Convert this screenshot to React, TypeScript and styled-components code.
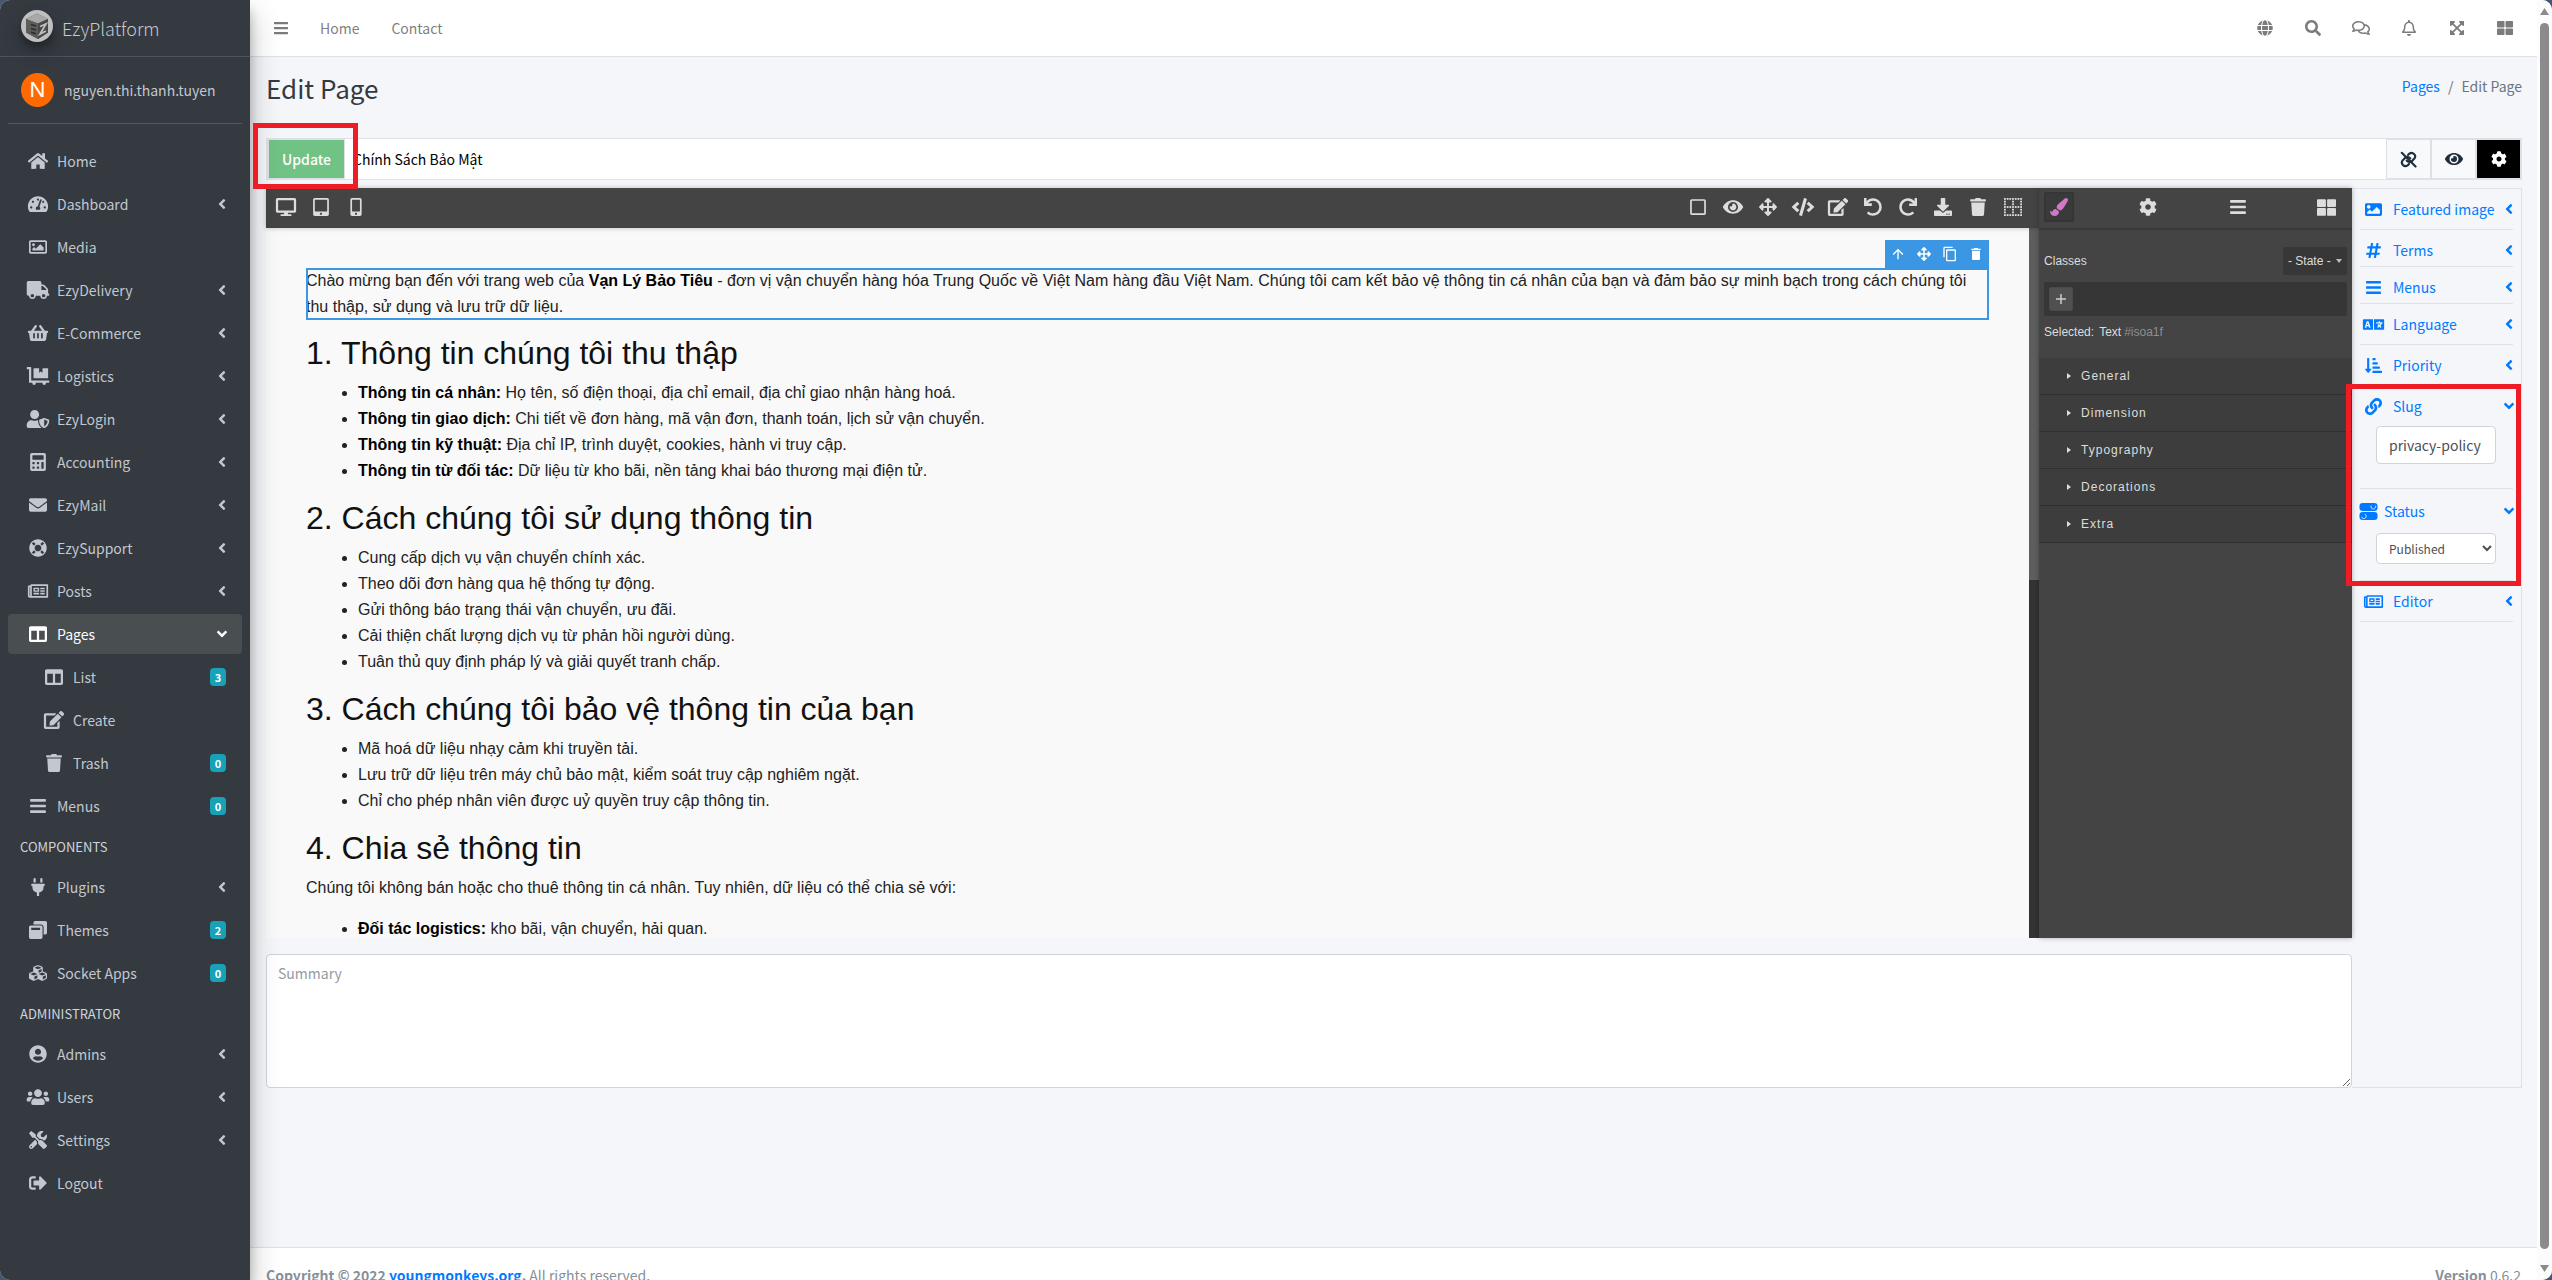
import React from "react";
import styled, { createGlobalStyle, css } from "styled-components";
import {
  FaArrowsAlt, FaBars, FaCalculator, FaAngleLeft, FaAngleDown,
  FaCode, FaCog, FaColumns, FaCubes, FaDesktop, FaDollyFlatbed, FaDownload, FaEdit, FaEnvelope, FaExpandArrowsAlt,
  FaEye, FaGlobe, FaHashtag, FaHome, FaImage, FaLanguage, FaLifeRing, FaLink, FaMobileAlt, FaPaintBrush, FaPlug,
  FaRedo, FaRegBell, FaRegComments, FaRegImage, FaRegNewspaper, FaRegSquare, FaSearch, FaShoppingBasket,
  FaSignOutAlt, FaSortAmountDownAlt, FaTabletAlt, FaTachometerAlt, FaThLarge, FaTools, FaTrash, FaTruck, FaUndo,
  FaUserCircle, FaUserShield, FaUsers, FaWindowRestore,
} from "react-icons/fa";
import { MdArrowUpward, MdContentCopy, MdDelete } from "react-icons/md";

const uiFont = '"Source Sans Pro", "Noto Sans CJK SC", "Noto Sans", sans-serif';
const docFont = '"Liberation Sans", Arial, Helvetica, sans-serif';

const GlobalStyle = createGlobalStyle`
  *, *::before, *::after { box-sizing: border-box; }
  body {
    margin: 0;
    background: #46586f;
    color: #212529;
    font-family: ${uiFont};
    font-size: 14px;
    line-height: 24px;
  }
  button, input, select, textarea { font: inherit; }
  a { color: #007bff; text-decoration: none; }
  h1, h2, p, ul { margin: 0; padding: 0; }
`;

/* The drawing is wider than tall so that wide icons keep their full height. */
const Glyph = styled.span<{ $size: number; $box?: number }>`
  display: inline-flex;
  flex: none;
  align-items: center;
  justify-content: center;
  width: ${(p) => (p.$box ? `${p.$box}px` : "auto")};
  svg {
    display: block;
    flex: none;
    width: ${(p) => p.$size + 6}px;
    height: ${(p) => p.$size}px;
  }
`;

const Window = styled.div`
  display: flex;
  height: 100vh;
  overflow: hidden;
  border-radius: 10px;
  background: #f4f6f9;
`;

/* ---------- Sidebar ---------- */

const Sidebar = styled.aside`
  position: relative;
  z-index: 5;
  flex: none;
  width: 250px;
  background: #343a40;
  color: #c2c7d0;
  box-shadow: 0 14px 28px rgba(0, 0, 0, 0.25), 0 10px 10px rgba(0, 0, 0, 0.22);
`;

const Brand = styled.a`
  display: flex;
  align-items: center;
  gap: 9px;
  height: 57px;
  padding-left: 21px;
  border-bottom: 1px solid #4b545c;
  color: #c6c8ca;
  font-size: 18px;
  font-weight: 300;
`;

const BrandMark = styled.span`
  width: 32px;
  height: 32px;
  margin-bottom: 4px;
  border-radius: 50%;
  box-shadow: 0 10px 20px rgba(0, 0, 0, 0.19), 0 6px 6px rgba(0, 0, 0, 0.23);
  svg { display: block; }
`;

const UserPanel = styled.a`
  display: flex;
  align-items: center;
  gap: 10px;
  height: 67px;
  margin: 0 8px;
  padding-left: 13px;
  border-bottom: 1px solid #4f5962;
  color: #c2c7d0;
`;

const Avatar = styled.span`
  width: 33px;
  height: 34px;
  border-radius: 50%;
  background: #ff6a00;
  color: #fff;
  font: 22px/34px ${docFont};
  text-align: center;
`;

const Nav = styled.nav`
  display: flex;
  flex-direction: column;
  gap: 3px;
  padding: 17px 8px 0;
`;

const NavLink = styled.a<{ $active?: boolean; $nested?: boolean }>`
  display: flex;
  align-items: center;
  gap: 6px;
  height: 40px;
  padding: 0 16px 0 ${(p) => (p.$nested ? 32 : 16)}px;
  border-radius: 4px;
  color: #c2c7d0;
  ${(p) => p.$active && css`
    background: #494e51;
    color: #fff;
  `}
`;

const NavText = styled.span`
  flex: 1;
`;

const NavHeader = styled.div`
  height: 35px;
  padding-left: 12px;
  color: #d0d4db;
  font-size: 13px;
  line-height: 35px;
`;

const Badge = styled.span`
  min-width: 16px;
  height: 18px;
  border-radius: 4px;
  background: #17a2b8;
  color: #fff;
  font-size: 11px;
  font-weight: 700;
  line-height: 18px;
  text-align: center;
`;

/* ---------- Page chrome ---------- */

const Page = styled.div`
  display: flex;
  flex: 1;
  flex-direction: column;
  min-width: 0;
`;

const Navbar = styled.header`
  display: flex;
  flex: none;
  align-items: center;
  justify-content: space-between;
  height: 57px;
  padding: 0 24px;
  border-bottom: 1px solid #dee2e6;
  background: #fff;
`;

const NavGroup = styled.div`
  display: flex;
  align-items: center;
  gap: 32px;
  color: #7b7b7b;
`;

const TopLink = styled.a`
  color: #7f7f7f;
`;

const IconButton = styled.button`
  display: flex;
  align-items: center;
  justify-content: center;
  padding: 0;
  border: 0;
  background: none;
  color: inherit;
  cursor: pointer;
`;

const Content = styled.main`
  flex: none;
  min-height: calc(100vh - 90px);
  padding: 0 15px 0 16px;
`;

const ContentHeader = styled.div`
  display: flex;
  justify-content: space-between;
  height: 81px;
  h1 {
    color: #343a40;
    font-size: 26px;
    font-weight: 400;
    line-height: 62px;
  }
`;

const Breadcrumb = styled.nav`
  display: flex;
  gap: 8px;
  color: #6c757d;
  line-height: 58px;
`;

const TitleBar = styled.div`
  display: flex;
  height: 42px;
  margin-bottom: 8px;
  border: 1px solid #dee2e6;
  background: #fff;
`;

const UpdateCell = styled.div`
  position: relative;
  display: flex;
  width: 78px;
  padding: 1px 1px 1px 2px;
  background: #dee0e6;
`;

const UpdateButton = styled.button`
  flex: 1;
  padding: 0;
  border: 0;
  background: #71c285;
  color: #fff;
  font-weight: 500;
`;

const Callout = styled.div<{ $inset: string }>`
  position: absolute;
  inset: ${(p) => p.$inset};
  z-index: 10;
  border: 5px solid #ee1c25;
  pointer-events: none;
`;

const TitleInput = styled.input`
  flex: 1;
  min-width: 0;
  padding: 0 8px;
  border: 0;
  outline: 0;
  background: #fff;
  color: #000;
`;

const TitleAction = styled.button<{ $dark?: boolean }>`
  display: flex;
  align-items: center;
  justify-content: center;
  width: 45px;
  padding: 0;
  border: 1px solid #dddfe6;
  background: ${(p) => (p.$dark ? "#000" : "#f8f9fb")};
  color: ${(p) => (p.$dark ? "#fff" : "#1f2d3d")};
`;

const Workspace = styled.div`
  display: grid;
  grid-template-columns: minmax(0, 1fr) 170px;
`;

const MainColumn = styled.div`
  display: flex;
  flex-direction: column;
  gap: 16px;
`;

/* ---------- Visual editor ---------- */

const Editor = styled.div`
  display: flex;
  height: 750px;
  background: #444;
  color: #ddd;
  font-family: ${docFont};
  font-size: 12px;
`;

const CanvasColumn = styled.div`
  display: flex;
  flex: 85;
  flex-direction: column;
  min-width: 0;
`;

const EditorToolbar = styled.div`
  z-index: 1;
  display: flex;
  flex: none;
  align-items: center;
  justify-content: space-between;
  height: 40px;
  padding: 0 9px 2px 2px;
  background: #444;
  box-shadow: 0 0 5px rgba(0, 0, 0, 0.25);
`;

const ToolRow = styled.div`
  display: flex;
`;

const Tool = styled(IconButton)`
  width: 35px;
  height: 36px;
  color: #ddd;
`;

const CanvasFrame = styled.div`
  display: flex;
  flex: 1;
  min-height: 0;
`;

const Document = styled.article`
  flex: 1;
  min-width: 0;
  padding: 40px;
  overflow: hidden;
  background: #f9f9f9;
  color: #222;
  font-size: 16px;
  line-height: 26px;
  h2 {
    margin-bottom: 8px;
    color: #111;
    font-size: 32px;
    font-weight: 400;
    line-height: 38px;
  }
  p { margin-bottom: 15px; }
  ul { margin-bottom: 15px; padding-left: 52px; }
  strong { color: #000; }
`;

const SelectedBlock = styled.div`
  position: relative;
  margin-bottom: 14px;
  outline: 2px solid #3b97e3;
  outline-offset: -2px;
  p { margin: 0; }
`;

const BlockActions = styled.div`
  position: absolute;
  right: 0;
  bottom: 100%;
  display: flex;
  height: 28px;
  background: #3b97e3;
  color: #fff;
`;

const BlockAction = styled(IconButton)`
  width: 26px;
`;

const CanvasScroll = styled.div`
  width: 10px;
  background: #333;
  &::before {
    display: block;
    height: 352px;
    background: #5e5e5e;
    content: "";
  }
`;

const StylePanel = styled.section`
  z-index: 2;
  flex: 15;
  min-width: 0;
  background: #444;
  box-shadow: 0 0 5px rgba(0, 0, 0, 0.3);
`;

const PanelTabs = styled.div`
  display: flex;
  align-items: center;
  justify-content: space-between;
  height: 42px;
  padding: 0 10px 2px 5px;
  border-bottom: 2px solid #393939;
`;

const PanelTab = styled(IconButton)<{ $active?: boolean }>`
  width: 30px;
  height: 30px;
  border-radius: 2px;
  color: ${(p) => (p.$active ? "#d278c9" : "#ddd")};
  ${(p) => p.$active && css`
    background: #3a3a3a;
    box-shadow: inset 0 0 3px rgba(0, 0, 0, 0.25);
  `}
`;

const ClassManager = styled.div`
  height: 128px;
  padding: 17px 5px 0;
`;

const Row = styled.div`
  display: flex;
  align-items: center;
  justify-content: space-between;
  margin-bottom: 7px;
`;

const StateField = styled.div`
  position: relative;
  display: flex;
  align-items: center;
  width: 64px;
  height: 28px;
  border-radius: 2px;
  background: #373737;
  &::after {
    position: absolute;
    right: 5px;
    border: 3px solid transparent;
    border-top: 4px solid #bbb;
    border-bottom: 0;
    content: "";
    pointer-events: none;
  }
  select {
    width: 100%;
    padding: 0 0 0 5px;
    border: 0;
    appearance: none;
    background: none;
    color: #ddd;
  }
`;

const TagBox = styled.div`
  height: 34px;
  margin-bottom: 4px;
  padding: 5px;
  border-radius: 2px;
  background: #363636;
`;

const AddTag = styled(IconButton)`
  width: 24px;
  height: 24px;
  border: 1px solid #4a4a4a;
  border-radius: 2px;
  background: #505050;
  color: #ccc;
`;

const SelectedLine = styled.div`
  display: flex;
  gap: 5px;
  b { margin-left: -2px; color: #8f8f8f; font-weight: 400; }
`;

const Sector = styled.button`
  display: flex;
  align-items: center;
  gap: 10px;
  width: 100%;
  height: 37px;
  padding: 0 0 0 28px;
  border: 0;
  border-bottom: 1px solid #303030;
  background: #3d3d3d;
  color: #ddd;
  letter-spacing: 1px;
  text-align: left;
  &::before {
    border: 3px solid transparent;
    border-left: 4px solid #ddd;
    border-right: 0;
    content: "";
  }
`;

const Summary = styled.textarea`
  display: block;
  width: 100%;
  height: 134px;
  padding: 6px 11px;
  border: 1px solid #ced4da;
  border-radius: 4px;
  background: #fff;
  resize: vertical;
  &::placeholder { color: #939ba2; }
`;

/* ---------- Page settings ---------- */

const Settings = styled.aside`
  padding: 0 8px;
  border: 1px solid #dee2e6;
  border-left: 0;
`;

const Setting = styled.section<{ $start: number; $end: number }>`
  padding: ${(p) => p.$start}px 0 ${(p) => p.$end}px;
  border-bottom: 1px solid #dee2e6;
`;

const SettingToggle = styled.button`
  display: flex;
  align-items: center;
  width: 100%;
  height: 24px;
  padding: 0;
  border: 0;
  background: none;
  color: #007bff;
  white-space: nowrap;
`;

const SettingName = styled.span`
  flex: 1;
  padding-left: 7px;
  text-align: left;
`;

const fieldStyle = css`
  display: block;
  width: 120px;
  margin: 8px 0 0 16px;
  border: 1px solid #ced4da;
  border-radius: 4px;
  background: #fff;
  color: #495057;
`;

const SlugInput = styled.input`
  ${fieldStyle}
  height: 38px;
  padding: 0 12px;
`;

const StatusSelect = styled.select`
  ${fieldStyle}
  height: 31px;
  margin-top: 10px;
  padding: 0 0 0 8px;
  font-size: 12px;
`;

const Highlighted = styled.div`
  position: relative;
`;

const Footer = styled.footer`
  display: flex;
  flex: none;
  justify-content: space-between;
  padding: 15px 16px;
  border-top: 1px solid #dee2e6;
  background: #fff;
  color: #869099;
`;

const WindowScroll = styled.div`
  display: flex;
  flex: none;
  flex-direction: column;
  align-items: center;
  justify-content: space-between;
  width: 15px;
  padding: 8px 0;
  background: #fcfcfc;
  color: #8b8b8b;
  svg { display: block; }
`;

const ScrollThumb = styled.div`
  flex: 1;
  width: 9px;
  margin: 8px 0 16px;
  border-radius: 5px;
  background: #8b8b8b;
`;

/* ---------- Drawings ---------- */

const LogoMark = () => (
  <svg width="32" height="32" viewBox="0 0 32 32" aria-hidden="true">
    <circle cx="16" cy="16" r="16" fill="#bfbfbf" />
    <path d="M16 3.500 27 9v13.500L17 29 5 22.500V9z" fill="#555" />
    <path d="M16 3.500 27 9l-10 4.500L5 9z" fill="#a8a8a8" />
    <path d="M5 9l12 4.500V29L5 22.500z" fill="#5c5c5c" />
    <path d="M17 13.500 27 9v13.500L17 29z" fill="#484848" />
    <path d="M10 14.500l5 1.500M10 18.500l5 1.500M10 22l5 2" stroke="#2c2c2c" strokeWidth="1.800" />
    <path d="M19 16.500l6-2.500-6 10 6-3" fill="none" stroke="#bdbdbd" strokeWidth="1.800" />
  </svg>
);

const LinkSlash = () => (
  <svg viewBox="0 0 24 24" fill="none" stroke="currentColor" strokeWidth="3" strokeLinecap="round" strokeLinejoin="round">
    <path d="M9.500 13.500a5 5 0 0 0 7.500.5l3.300-3.300a5 5 0 0 0-7-7l-2 2" />
    <path d="M14.500 10.500a5 5 0 0 0-7.500-.5l-3.300 3.300a5 5 0 0 0 7 7l2-2" />
    <path d="M2.500 2.500 22 22" />
  </svg>
);

const StatusIcon = () => (
  <svg viewBox="0 0 17 16" fill="currentColor">
    <rect width="17" height="7.500" rx="3" />
    <rect y="8.500" width="17" height="7.500" rx="3" />
    <path d="M11 2.500a2.200 2.200 0 1 0 4 0" fill="none" stroke="#f4f6f9" strokeWidth=".8" />
    <path d="M2 13a2.200 2.200 0 1 0 3-2.500" fill="none" stroke="#f4f6f9" strokeWidth=".8" />
  </svg>
);

const PlusIcon = () => (
  <svg viewBox="0 0 10 10" stroke="currentColor" strokeWidth="1.500"><path d="M5 0v10M0 5h10" /></svg>
);

const gridSteps = [0, 1, 2, 3, 4, 5, 6];

const DottedGrid = () => (
  <svg viewBox="0 0 20 20" fill="currentColor">
    {gridSteps.flatMap((row) =>
      gridSteps
        .filter((col) => row % 3 === 0 || col % 3 === 0)
        .map((col) => <rect key={`${row}-${col}`} x={col * 3} y={row * 3} width="2" height="2" />)
    )}
  </svg>
);

/* ---------- Data ---------- */

type Item = { icon: React.ReactNode; label: string; arrow?: boolean; badge?: number; active?: boolean; nested?: boolean };

const mainItems: Item[] = [
  { icon: <FaHome />, label: "Home" },
  { icon: <FaTachometerAlt />, label: "Dashboard", arrow: true },
  { icon: <FaRegImage />, label: "Media" },
  { icon: <FaTruck />, label: "EzyDelivery", arrow: true },
  { icon: <FaShoppingBasket />, label: "E-Commerce", arrow: true },
  { icon: <FaDollyFlatbed />, label: "Logistics", arrow: true },
  { icon: <FaUserShield />, label: "EzyLogin", arrow: true },
  { icon: <FaCalculator />, label: "Accounting", arrow: true },
  { icon: <FaEnvelope />, label: "EzyMail", arrow: true },
  { icon: <FaLifeRing />, label: "EzySupport", arrow: true },
  { icon: <FaRegNewspaper />, label: "Posts", arrow: true },
  { icon: <FaColumns />, label: "Pages", arrow: true, active: true },
  { icon: <FaColumns />, label: "List", badge: 3, nested: true },
  { icon: <FaEdit />, label: "Create", nested: true },
  { icon: <FaTrash />, label: "Trash", badge: 0, nested: true },
  { icon: <FaBars />, label: "Menus", badge: 0 },
];

const componentItems: Item[] = [
  { icon: <FaPlug />, label: "Plugins", arrow: true },
  { icon: <FaWindowRestore />, label: "Themes", badge: 2 },
  { icon: <FaCubes />, label: "Socket Apps", badge: 0 },
];

const adminItems: Item[] = [
  { icon: <FaUserCircle />, label: "Admins", arrow: true },
  { icon: <FaUsers />, label: "Users", arrow: true },
  { icon: <FaTools />, label: "Settings", arrow: true },
  { icon: <FaSignOutAlt />, label: "Logout" },
];

const topActions: [string, React.ReactNode][] = [
  ["Language", <FaGlobe />], ["Search", <FaSearch />], ["Messages", <FaRegComments />],
  ["Notifications", <FaRegBell />], ["Fullscreen", <FaExpandArrowsAlt />], ["Apps", <FaThLarge />],
];

const deviceTools: [string, React.ReactNode][] = [
  ["Desktop", <FaDesktop />], ["Tablet", <FaTabletAlt />], ["Mobile", <FaMobileAlt />],
];

const editorTools: [string, React.ReactNode][] = [
  ["Borders", <FaRegSquare />], ["Preview", <FaEye />], ["Fullscreen", <FaArrowsAlt />], ["View code", <FaCode />],
  ["Edit code", <FaEdit />], ["Undo", <FaUndo />], ["Redo", <FaRedo />], ["Import", <FaDownload />],
  ["Clear", <FaTrash />], ["Grid", <DottedGrid />],
];

/* ---------- Parts ---------- */

const MenuItems = ({ items }: { items: Item[] }) => (
  <>
    {items.map((item) => (
      <NavLink key={item.label} href="#" $active={item.active} $nested={item.nested}>
        <Glyph $size={18} $box={27}>{item.icon}</Glyph>
        <NavText>{item.label}</NavText>
        {item.arrow && <Glyph $size={16} $box={8}>{item.active ? <FaAngleDown /> : <FaAngleLeft />}</Glyph>}
        {item.badge !== undefined && <Badge>{item.badge}</Badge>}
      </NavLink>
    ))}
  </>
);

const Tools = ({ tools }: { tools: [string, React.ReactNode][] }) => (
  <ToolRow>
    {tools.map(([name, icon]) => (
      <Tool key={name} type="button" aria-label={name}><Glyph $size={18}>{icon}</Glyph></Tool>
    ))}
  </ToolRow>
);

type SettingProps = { icon: React.ReactNode; name: string; start?: number; end?: number; iconBox?: number; open?: boolean; children?: React.ReactNode };

const SettingItem = ({ icon, name, start = 8, end = 8, iconBox = 26, open, children }: SettingProps) => (
  <Setting $start={start} $end={end}>
    <SettingToggle type="button" aria-expanded={!!open}>
      <Glyph $size={17} $box={iconBox}>{icon}</Glyph>
      <SettingName>{name}</SettingName>
      <Glyph $size={16} $box={8}>{open ? <FaAngleDown /> : <FaAngleLeft />}</Glyph>
    </SettingToggle>
    {children}
  </Setting>
);

export default function App() {
  return (
    <>
      <GlobalStyle />
      <Window>
        <Sidebar>
          <Brand href="#"><BrandMark><LogoMark /></BrandMark>EzyPlatform</Brand>
          <UserPanel href="#"><Avatar>N</Avatar>nguyen.thi.thanh.tuyen</UserPanel>
          <Nav aria-label="Main">
            <MenuItems items={mainItems} />
            <NavHeader>COMPONENTS</NavHeader>
            <MenuItems items={componentItems} />
            <NavHeader>ADMINISTRATOR</NavHeader>
            <MenuItems items={adminItems} />
          </Nav>
        </Sidebar>

        <Page>
          <Navbar>
            <NavGroup>
              <IconButton type="button" aria-label="Toggle menu"><Glyph $size={16} $box={14}><FaBars /></Glyph></IconButton>
              <TopLink href="#">Home</TopLink>
              <TopLink href="#">Contact</TopLink>
            </NavGroup>
            <NavGroup>
              {topActions.map(([name, icon]) => (
                <IconButton key={name} type="button" aria-label={name}><Glyph $size={16} $box={16}>{icon}</Glyph></IconButton>
              ))}
            </NavGroup>
          </Navbar>

          <Content>
            <ContentHeader>
              <h1>Edit Page</h1>
              <Breadcrumb aria-label="Breadcrumb"><a href="#">Pages</a><span>/</span><span>Edit Page</span></Breadcrumb>
            </ContentHeader>

            <TitleBar>
              <UpdateCell>
                <UpdateButton type="button">Update</UpdateButton>
                <Callout $inset="-16px -13px -10px -14px" />
              </UpdateCell>
              <TitleInput aria-label="Title" defaultValue="Chính Sách Bảo Mật" />
              <TitleAction type="button" aria-label="Copy link"><Glyph $size={17}><LinkSlash /></Glyph></TitleAction>
              <TitleAction type="button" aria-label="Preview"><Glyph $size={16}><FaEye /></Glyph></TitleAction>
              <TitleAction type="button" aria-label="Settings" $dark><Glyph $size={16}><FaCog /></Glyph></TitleAction>
            </TitleBar>

            <Workspace>
              <MainColumn>
                <Editor>
                  <CanvasColumn>
                    <EditorToolbar>
                      <Tools tools={deviceTools} />
                      <Tools tools={editorTools} />
                    </EditorToolbar>
                    <CanvasFrame>
                      <Document>
                        <SelectedBlock>
                          <p>Chào mừng bạn đến với trang web của <strong>Vạn Lý Bảo Tiêu</strong> - đơn vị vận chuyển hàng hóa Trung Quốc về Việt Nam hàng đầu Việt Nam. Chúng tôi cam kết bảo vệ thông tin cá nhân của bạn và đảm bảo sự minh bạch trong cách chúng tôi thu thập, sử dụng và lưu trữ dữ liệu.</p>
                          <BlockActions>
                            <BlockAction type="button" aria-label="Select parent"><Glyph $size={16}><MdArrowUpward /></Glyph></BlockAction>
                            <BlockAction type="button" aria-label="Move"><Glyph $size={14}><FaArrowsAlt /></Glyph></BlockAction>
                            <BlockAction type="button" aria-label="Copy"><Glyph $size={16}><MdContentCopy /></Glyph></BlockAction>
                            <BlockAction type="button" aria-label="Delete"><Glyph $size={16}><MdDelete /></Glyph></BlockAction>
                          </BlockActions>
                        </SelectedBlock>
                        <h2>1. Thông tin chúng tôi thu thập</h2>
                        <ul>
                          <li><strong>Thông tin cá nhân:</strong> Họ tên, số điện thoại, địa chỉ email, địa chỉ giao nhận hàng hoá.</li>
                          <li><strong>Thông tin giao dịch:</strong> Chi tiết về đơn hàng, mã vận đơn, thanh toán, lịch sử vận chuyển.</li>
                          <li><strong>Thông tin kỹ thuật:</strong> Địa chỉ IP, trình duyệt, cookies, hành vi truy cập.</li>
                          <li><strong>Thông tin từ đối tác:</strong> Dữ liệu từ kho bãi, nền tảng khai báo thương mại điện tử.</li>
                        </ul>
                        <h2>2. Cách chúng tôi sử dụng thông tin</h2>
                        <ul>
                          <li>Cung cấp dịch vụ vận chuyển chính xác.</li>
                          <li>Theo dõi đơn hàng qua hệ thống tự động.</li>
                          <li>Gửi thông báo trạng thái vận chuyển, ưu đãi.</li>
                          <li>Cải thiện chất lượng dịch vụ từ phản hồi người dùng.</li>
                          <li>Tuân thủ quy định pháp lý và giải quyết tranh chấp.</li>
                        </ul>
                        <h2>3. Cách chúng tôi bảo vệ thông tin của bạn</h2>
                        <ul>
                          <li>Mã hoá dữ liệu nhạy cảm khi truyền tải.</li>
                          <li>Lưu trữ dữ liệu trên máy chủ bảo mật, kiểm soát truy cập nghiêm ngặt.</li>
                          <li>Chỉ cho phép nhân viên được uỷ quyền truy cập thông tin.</li>
                        </ul>
                        <h2>4. Chia sẻ thông tin</h2>
                        <p>Chúng tôi không bán hoặc cho thuê thông tin cá nhân. Tuy nhiên, dữ liệu có thể chia sẻ với:</p>
                        <ul>
                          <li><strong>Đối tác logistics:</strong> kho bãi, vận chuyển, hải quan.</li>
                        </ul>
                      </Document>
                      <CanvasScroll />
                    </CanvasFrame>
                  </CanvasColumn>

                  <StylePanel>
                    <PanelTabs>
                      <PanelTab type="button" aria-label="Styles" $active><Glyph $size={18}><FaPaintBrush /></Glyph></PanelTab>
                      <PanelTab type="button" aria-label="Traits"><Glyph $size={18}><FaCog /></Glyph></PanelTab>
                      <PanelTab type="button" aria-label="Layers"><Glyph $size={18}><FaBars /></Glyph></PanelTab>
                      <PanelTab type="button" aria-label="Blocks"><Glyph $size={19}><FaThLarge /></Glyph></PanelTab>
                    </PanelTabs>
                    <ClassManager>
                      <Row>
                        <span>Classes</span>
                        <StateField>
                          <select aria-label="State"><option>- State -</option></select>
                        </StateField>
                      </Row>
                      <TagBox><AddTag type="button" aria-label="Add class"><Glyph $size={10}><PlusIcon /></Glyph></AddTag></TagBox>
                      <SelectedLine><span>Selected:</span><span>Text</span><b>#isoa1f</b></SelectedLine>
                    </ClassManager>
                    {["General", "Dimension", "Typography", "Decorations", "Extra"].map((name) => (
                      <Sector key={name} type="button">{name}</Sector>
                    ))}
                  </StylePanel>
                </Editor>
                <Summary aria-label="Summary" placeholder="Summary" />
              </MainColumn>

              <Settings>
                <SettingItem icon={<FaImage />} name="Featured image" />
                <SettingItem icon={<FaHashtag />} name="Terms" end={4} />
                <SettingItem icon={<FaBars />} name="Menus" end={4} />
                <SettingItem icon={<FaLanguage />} name="Language" />
                <SettingItem icon={<FaSortAmountDownAlt />} name="Priority" />
                <Highlighted>
                  <SettingItem icon={<FaLink />} name="Slug" end={24} open>
                    <SlugInput aria-label="Slug" defaultValue="privacy-policy" />
                  </SettingItem>
                  <SettingItem icon={<StatusIcon />} name="Status" start={10} end={16} iconBox={17} open>
                    <StatusSelect aria-label="Status" defaultValue="Published">
                      <option>Published</option>
                      <option>Draft</option>
                    </StatusSelect>
                  </SettingItem>
                  <Callout $inset="-2px -8px -5px -14px" />
                </Highlighted>
                <SettingItem icon={<FaRegNewspaper />} name="Editor" />
              </Settings>
            </Workspace>
          </Content>

          <Footer>
            <span><strong>Copyright © 2022 <a href="#">youngmonkeys.org</a>.</strong> All rights reserved.</span>
            <span><strong>Version</strong> 0.6.2</span>
          </Footer>
        </Page>

        <WindowScroll aria-hidden="true">
          <svg width="9" height="7" viewBox="0 0 9 7" fill="currentColor"><path d="M4.500 0 9 7H0z" /></svg>
          <ScrollThumb />
          <svg width="9" height="7" viewBox="0 0 9 7" fill="currentColor"><path d="M0 0h9L4.500 7z" /></svg>
        </WindowScroll>
      </Window>
    </>
  );
}
